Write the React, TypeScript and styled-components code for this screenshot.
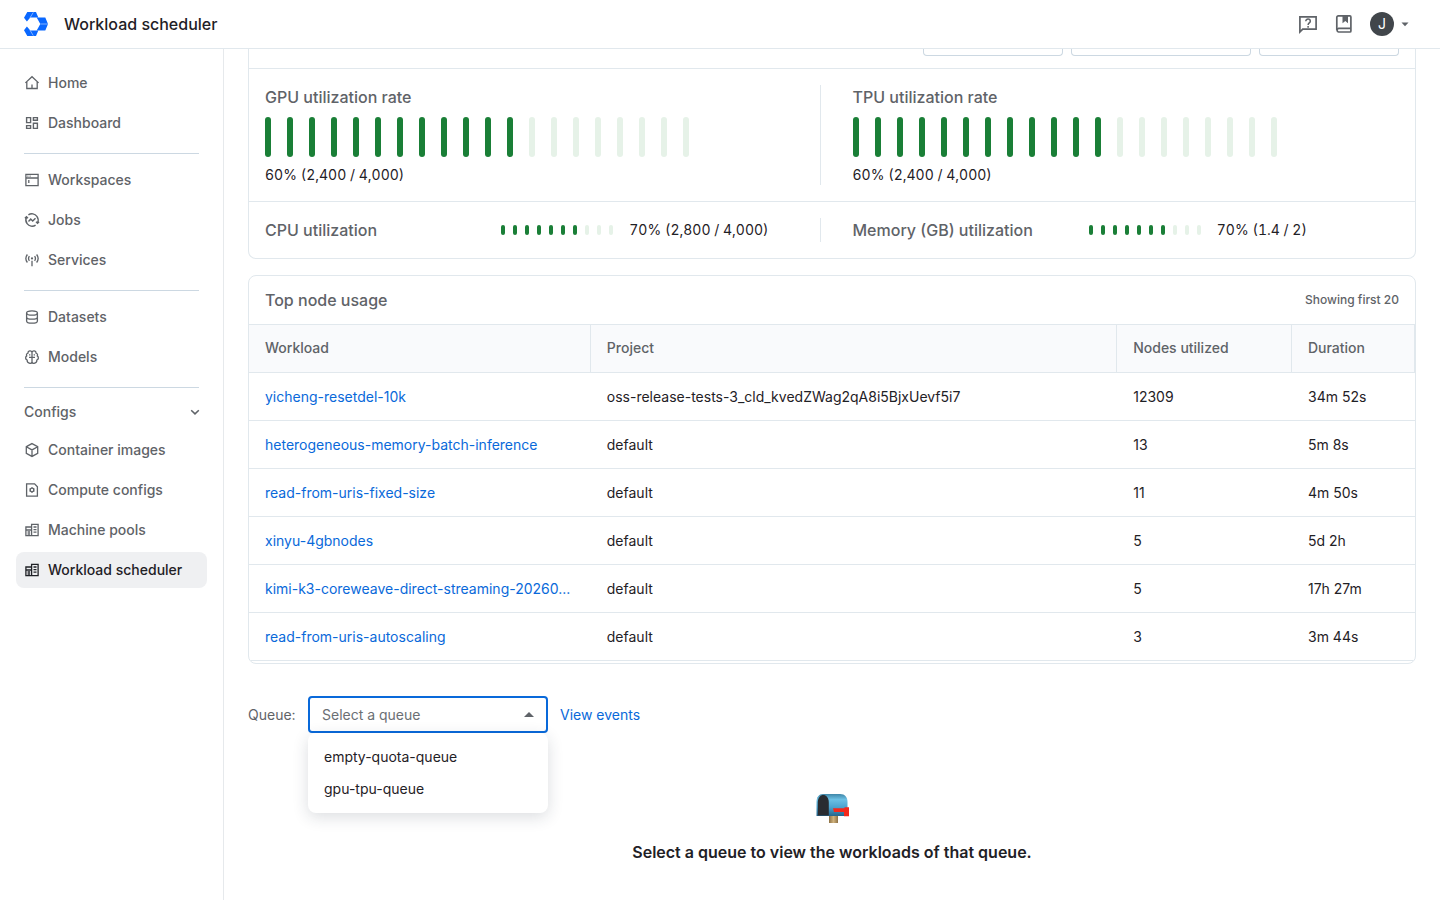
import React from 'react';
import styled, { createGlobalStyle } from 'styled-components';

const GlobalStyle = createGlobalStyle`
  *, *::before, *::after { box-sizing: border-box; }
  html, body { margin: 0; height: 100%; overflow: hidden; background: #fff; }
  body {
    font-family: Inter, "Liberation Sans", sans-serif;
    font-size: 14px;
    line-height: 20px;
    color: #1f2126;
  }
`;

const Page = styled.div`
  display: flex;
  flex-direction: column;
  height: 900px;
`;

const Header = styled.header`
  display: flex;
  align-items: center;
  height: 49px;
  flex: none;
  padding: 0 31px 0 24px;
  border-bottom: 1px solid #e1e8ed;
  svg { display: block; }
`;

const HeaderTitle = styled.h1`
  margin: 0 auto 0 16px;
  font-size: 16px;
  line-height: 24px;
  font-weight: 500;
`;

const HeaderActions = styled.div`
  display: flex;
  align-items: center;
  color: #5f6368;
  > svg + svg { margin-left: 12px; }
`;

const Avatar = styled.div`
  width: 24px;
  height: 24px;
  margin: 0 7px 0 14px;
  border-radius: 50%;
  background: #41464b;
  color: #fff;
  font-size: 14px;
  line-height: 24px;
  text-align: center;
`;

const Body = styled.div`
  display: flex;
  flex: 1;
  min-height: 0;
`;

const Sidebar = styled.nav`
  width: 224px;
  flex: none;
  padding: 16px 16px 0;
  border-right: 1px solid #e6e9ec;
  display: flex;
  flex-direction: column;
  gap: 4px;
`;

const NavItem = styled.a<{ $active?: boolean }>`
  display: flex;
  align-items: center;
  gap: 8px;
  height: 36px;
  padding: 0 8px;
  border-radius: 8px;
  font-weight: 500;
  color: ${(p) => (p.$active ? '#1f2126' : '#5f6368')};
  background: ${(p) => (p.$active ? '#eff0f2' : 'transparent')};
`;

const NavDivider = styled.hr`
  width: 175px;
  height: 1px;
  margin: 8px 8px 4px;
  border: 0;
  background: #ccd8e2;
`;

const NavGroup = styled.div`
  display: flex;
  align-items: center;
  justify-content: space-between;
  height: 32px;
  padding: 0 4px 0 8px;
  font-weight: 500;
  color: #5f6368;
`;

const Main = styled.main`
  flex: 1;
  min-width: 0;
  padding: 0 24px;
  overflow: hidden;
`;

const SummaryCard = styled.section`
  border: 1px solid #e1e8ed;
  border-top: 0;
  border-radius: 0 0 8px 8px;
`;

const FilterBar = styled.div`
  display: flex;
  justify-content: flex-end;
  gap: 8px;
  height: 20px;
  padding-right: 16px;
  border-bottom: 1px solid #e1e8ed;
`;

const FilterEdge = styled.div<{ $width: number }>`
  width: ${(p) => p.$width}px;
  height: 7px;
  border: 1px solid #ccd8e2;
  border-top: 0;
  border-radius: 0 0 4px 4px;
`;

const MetricRow = styled.div`
  display: flex;
  padding: 16px;
  & + & { border-top: 1px solid #e1e8ed; }
`;

const Metric = styled.div<{ $inline?: boolean }>`
  display: flex;
  flex-direction: ${(p) => (p.$inline ? 'row' : 'column')};
  align-items: ${(p) => (p.$inline ? 'center' : 'stretch')};
  gap: ${(p) => (p.$inline ? '16px' : '8px')};
  width: 555px;
  & + & {
    width: auto;
    flex: 1;
    border-left: 1px solid #e1e8ed;
    padding-left: 31.5px;
  }
`;

const MetricTitle = styled.div<{ $inline?: boolean }>`
  width: ${(p) => (p.$inline ? '220.25px' : 'auto')};
  font-size: 16px;
  line-height: 24px;
  font-weight: 500;
  color: #5f6368;
`;

const Bars = styled.div<{ $small?: boolean }>`
  display: flex;
  gap: ${(p) => (p.$small ? '8px' : '16px')};
`;

const Bar = styled.span<{ $small?: boolean; $on: boolean }>`
  width: ${(p) => (p.$small ? 4 : 6)}px;
  height: ${(p) => (p.$small ? 10 : 40)}px;
  border-radius: ${(p) => (p.$small ? 2 : 3)}px;
  background: ${(p) => (p.$on ? '#1a7f37' : '#e6f2e8')};
`;

const MetricValue = styled.div`
  font-variant-numeric: tabular-nums;
`;

const TableCard = styled.section`
  height: 389px;
  margin-top: 16px;
  border: 1px solid #e1e8ed;
  border-radius: 8px;
  overflow: hidden;
`;

const TableTitle = styled.div`
  display: flex;
  align-items: center;
  justify-content: space-between;
  height: 49px;
  padding: 0 16px;
  border-bottom: 1px solid #e1e8ed;
  color: #5f6368;
  font-size: 16px;
  line-height: 24px;
  font-weight: 500;
  small { font-size: 12px; line-height: 16px; }
`;

const Row = styled.div`
  display: grid;
  grid-template-columns: 341.8px 526.4px 174.8px 123px;
  height: 48px;
  border-bottom: 1px solid #e1e8ed;
`;

const HeadRow = styled(Row)`
  background: #f9fafc;
  color: #5f6368;
  font-weight: 500;
`;

const Cell = styled.div`
  padding: 14px 16px 0;
  white-space: nowrap;
  overflow: hidden;
  text-overflow: ellipsis;
  ${HeadRow} & { border-right: 1px solid #e1e8ed; padding-top: 13px; }
`;

const LinkCell = styled(Cell)`
  color: #0969da;
`;

const QueueBar = styled.div`
  display: flex;
  align-items: center;
  gap: 12px;
  margin-top: 32px;
  height: 37px;
`;

const QueueLabel = styled.span`
  width: 48px;
  color: #5f6368;
`;

const SelectWrap = styled.div`
  position: relative;
  width: 240px;
`;

const Select = styled.div`
  display: flex;
  align-items: center;
  justify-content: space-between;
  height: 37px;
  padding: 0 12px;
  border: 2px solid #0969da;
  border-radius: 4px;
  color: #6b6f74;
`;

const Menu = styled.div`
  position: absolute;
  top: 37px;
  left: 0;
  width: 240px;
  padding: 8px 0;
  border-radius: 8px;
  background: #fff;
  box-shadow: 0 4px 16px rgba(31, 45, 61, 0.16);
`;

const Option = styled.div`
  height: 32px;
  padding: 6px 16px;
`;

const TextLink = styled.a`
  color: #0969da;
`;

const Empty = styled.div`
  display: flex;
  flex-direction: column;
  align-items: center;
  margin-top: 60px;
  font-size: 16px;
  line-height: 24px;
  font-weight: 600;
  svg { display: block; margin: 0 0 16px 2px; }
`;

const Icon = styled.svg.attrs((p) => ({
  width: 16,
  height: 16,
  viewBox: '0 0 16 16',
  fill: 'none',
  stroke: 'currentColor',
  strokeWidth: p.strokeWidth ?? 1.3,
}))`
  flex: none;
`;

const HomeIcon = () => (
  <Icon>
    <path d="M1.4 7.9 8 1.7l6.6 6.2M2.8 6.8v6.7h10.4V6.8M8 9.5v4" />
  </Icon>
);
const DashboardIcon = () => (
  <Icon strokeWidth={1.4}>
    <path d="M2.6 2.6h4v5h-4zM9.4 2.6h4v2.6h-4zM2.6 10.6h4v2.8h-4zM9.4 8.2h4v5.2h-4z" />
  </Icon>
);
const WorkspacesIcon = () => (
  <Icon>
    <path d="M1.9 2.4h12.2v11.2H1.9zM2 6h12M4.8 8v3M3.4 4.2h1M5.6 4.2h1" />
  </Icon>
);
const JobsIcon = () => (
  <Icon strokeWidth={1.4}>
    <path d="M4.4 2.9a6.200 6.200 0 0 1 8.500 1.400 6.200 6.200 0 0 1 .6 6.400M11.600 13.100a6.200 6.200 0 0 1-8.500-1.400 6.200 6.200 0 0 1-.6-6.400M.9 6.300l1.600-1.500L4 6.200M15.100 9.700l-1.600 1.500L12 9.800M4.500 9.400l2.200-2.300 2 1.900 2.800-2.800" />
  </Icon>
);
const ServicesIcon = () => (
  <Icon>
    <path d="M3.4 2.5a6.5 6.5 0 0 0 0 8M12.6 2.5a6.5 6.5 0 0 1 0 8M5.4 4.2a4 4 0 0 0 0 4.7M10.6 4.2a4 4 0 0 1 0 4.7M8 8.8v5.4" />
    <circle cx="8" cy="6.4" r="1.1" fill="currentColor" stroke="none" />
  </Icon>
);
const DatasetsIcon = () => (
  <Icon>
    <ellipse cx="8" cy="4" rx="5.4" ry="2.2" />
    <path d="M2.6 4v8c0 1.2 2.4 2.2 5.4 2.2s5.4-1 5.4-2.2V4M2.6 8c0 1.2 2.4 2.2 5.4 2.2s5.4-1 5.4-2.2" />
  </Icon>
);
const ModelsIcon = () => (
  <Icon>
    <path d="M8 3.2C7.4 1.4 3.900 1.300 3.900 4.200 2.400 4.700 2.200 6 2.700 6.900 1.100 8 1.300 10.300 3.100 11 3.100 14.600 7.300 15.300 8 13V3.200C8.600 1.400 12.100 1.300 12.100 4.200c1.500.5 1.700 1.800 1.200 2.700 1.600 1.100 1.400 3.400-.4 4.100 0 3.600-4.200 4.300-4.900 2M5 8.300h6M5.700 5.300v1.200M10.300 5.300v1.200" />
  </Icon>
);
const CubeIcon = () => (
  <Icon>
    <path d="M8 1.6 13.7 4.7v6.6L8 14.4l-5.700-3.100V4.700zM2.300 4.700 8 7.900l5.700-3.200M8 7.900v6.500" />
  </Icon>
);
const ConfigIcon = () => (
  <Icon>
    <path d="M2.600 1.900h8l2.800 2.800v9.400H2.600z" />
    <circle cx="8" cy="8" r="1.800" />
    <path d="M8 5.200v1M8 9.800v1M5.600 6.600l.8.500M9.600 8.900l.8.500M5.600 9.400l.8-.5M9.600 7.100l.8-.5" />
  </Icon>
);
const PoolIcon = () => (
  <Icon>
    <path d="M7.600 5H1.900v8.600h12.200V2.400H7.600v11.200M1.900 8h5.700M3.600 10h2.500M3.600 12h2.500M9.500 5h3M9.500 7.600h3M9.500 10.200h3" />
  </Icon>
);

const Logo = () => (
  <svg width="24" height="24" viewBox="0 0 24 24">
    <g fill="#0a68ff">
      <path d="M3.300 0H12l2.300 5.600h-8L2.900 9.400 0 5.800z" />
      <path d="M3.300 24H12l2.300-5.600h-8l-3.400-3.800L0 18.200z" />
      <path d="M12.700 5.600h8.600L24 12l-2.700 6.400h-8.600L16.300 12z" />
    </g>
    <path d="M9.300.4 6 5.800M9.300 23.600 6 18.200M16.300 12h7.500" stroke="#b5d1ff" strokeWidth=".7" />
  </svg>
);

const HelpIcon = () => (
  <svg width="24" height="24" viewBox="0 0 24 24" fill="none" stroke="currentColor" strokeWidth="1.7">
    <path d="M3.900 20V4.900h16.200v12.200H6.700z" />
    <path d="M9.800 9.200c0-2.900 4.500-2.800 4.500 0 0 1.700-2.200 1.800-2.200 3.700M12.100 14v1.700" strokeWidth="1.500" />
  </svg>
);
const BookIcon = () => (
  <svg width="24" height="24" viewBox="0 0 24 24" fill="none" stroke="currentColor" strokeWidth="1.7">
    <path d="M18.900 16.300H6.600a1.900 1.900 0 0 0 0 3.700h11.300a1 1 0 0 0 1-1V4.900a1 1 0 0 0-1-1H6.300a1.500 1.500 0 0 0-1.500 1.500v12.800" />
    <path d="M10.500 4h5.500v7.200l-2.700-2.200-2.800 2.200z" fill="currentColor" stroke="none" />
  </svg>
);

const MailboxIcon = () => (
  <svg width="34" height="31" viewBox="0 0 34 31">
    <defs>
      <linearGradient id="shell" x1="0" y1="0" x2="0" y2="1">
        <stop offset="0" stopColor="#3f86a8" />
        <stop offset=".25" stopColor="#6cc0e4" />
        <stop offset=".6" stopColor="#4ba3cf" />
        <stop offset="1" stopColor="#25658c" />
      </linearGradient>
      <linearGradient id="post" x1="0" y1="0" x2="1" y2="0">
        <stop offset="0" stopColor="#8d7146" />
        <stop offset=".5" stopColor="#d0b27c" />
        <stop offset="1" stopColor="#8d7146" />
      </linearGradient>
    </defs>
    <path d="M13 22h9v8h-9z" fill="url(#post)" />
    <path d="M7 1h17c5 0 7.500 3.500 7.500 8v14H.5V9C.5 4 3 1 7 1z" fill="url(#shell)" />
    <path d="M1.800 22.500V9.500c0-10 11-10 11 0v13z" fill="#292c31" />
    <path d="M17 15.200h11.500v-.9H33v9h-5v-4.200H18z" fill="#f3281c" />
  </svg>
);

const primaryNav = [
  { label: 'Home', icon: HomeIcon },
  { label: 'Dashboard', icon: DashboardIcon },
];
const workNav = [
  { label: 'Workspaces', icon: WorkspacesIcon },
  { label: 'Jobs', icon: JobsIcon },
  { label: 'Services', icon: ServicesIcon },
];
const dataNav = [
  { label: 'Datasets', icon: DatasetsIcon },
  { label: 'Models', icon: ModelsIcon },
];
const configNav = [
  { label: 'Container images', icon: CubeIcon },
  { label: 'Compute configs', icon: ConfigIcon },
  { label: 'Machine pools', icon: PoolIcon },
  { label: 'Workload scheduler', icon: PoolIcon },
];

const workloads = [
  ['yicheng-resetdel-10k', 'oss-release-tests-3_cld_kvedZWag2qA8i5BjxUevf5i7', '12309', '34m 52s'],
  ['heterogeneous-memory-batch-inference', 'default', '13', '5m 8s'],
  ['read-from-uris-fixed-size', 'default', '11', '4m 50s'],
  ['xinyu-4gbnodes', 'default', '5', '5d 2h'],
  ['kimi-k3-coreweave-direct-streaming-20260...', 'default', '5', '17h 27m'],
  ['read-from-uris-autoscaling', 'default', '3', '3m 44s'],
];

type NavEntry = { label: string; icon: () => React.JSX.Element };

const NavList = ({ items }: { items: NavEntry[] }) => (
  <>
    {items.map(({ label, icon: Glyph }) => (
      <NavItem key={label} $active={label === 'Workload scheduler'}>
        <Glyph />
        {label}
      </NavItem>
    ))}
  </>
);

type GaugeProps = { title: string; value: string; total: number; filled: number; inline?: boolean };

const Gauge = ({ title, value, total, filled, inline }: GaugeProps) => (
  <Metric $inline={inline}>
    <MetricTitle $inline={inline}>{title}</MetricTitle>
    <Bars $small={inline}>
      {Array.from({ length: total }, (_, i) => (
        <Bar key={i} $small={inline} $on={i < filled} />
      ))}
    </Bars>
    <MetricValue>{value}</MetricValue>
  </Metric>
);

export default function App() {
  return (
    <Page>
      <GlobalStyle />
      <Header>
        <Logo />
        <HeaderTitle>Workload scheduler</HeaderTitle>
        <HeaderActions>
          <HelpIcon />
          <BookIcon />
          <Avatar>J</Avatar>
          <svg width="8" height="5" viewBox="0 0 8 5" fill="currentColor"><path d="M.5.5h7L4 4.2z" /></svg>
        </HeaderActions>
      </Header>
      <Body>
        <Sidebar>
          <NavList items={primaryNav} />
          <NavDivider />
          <NavList items={workNav} />
          <NavDivider />
          <NavList items={dataNav} />
          <NavDivider />
          <NavGroup>
            Configs
            <Icon strokeWidth={1.5}><path d="m4.200 6.200 3.800 3.700 3.800-3.700" /></Icon>
          </NavGroup>
          <NavList items={configNav} />
        </Sidebar>
        <Main>
          <SummaryCard>
            <FilterBar>
              <FilterEdge $width={140} />
              <FilterEdge $width={180} />
              <FilterEdge $width={140} />
            </FilterBar>
            <MetricRow>
              <Gauge title="GPU utilization rate" value="60% (2,400 / 4,000)" total={20} filled={12} />
              <Gauge title="TPU utilization rate" value="60% (2,400 / 4,000)" total={20} filled={12} />
            </MetricRow>
            <MetricRow>
              <Gauge inline title="CPU utilization" value="70% (2,800 / 4,000)" total={10} filled={7} />
              <Gauge inline title="Memory (GB) utilization" value="70% (1.4 / 2)" total={10} filled={7} />
            </MetricRow>
          </SummaryCard>
          <TableCard>
            <TableTitle>
              Top node usage
              <small>Showing first 20</small>
            </TableTitle>
            <HeadRow>
              <Cell>Workload</Cell>
              <Cell>Project</Cell>
              <Cell>Nodes utilized</Cell>
              <Cell>Duration</Cell>
            </HeadRow>
            {workloads.map(([name, project, nodes, duration]) => (
              <Row key={name}>
                <LinkCell>{name}</LinkCell>
                <Cell>{project}</Cell>
                <Cell>{nodes}</Cell>
                <Cell>{duration}</Cell>
              </Row>
            ))}
          </TableCard>
          <QueueBar>
            <QueueLabel>Queue:</QueueLabel>
            <SelectWrap>
              <Select>
                Select a queue
                <svg width="10" height="5" viewBox="0 0 10 5" fill="#5f6368"><path d="M0 5 5 0l5 5z" /></svg>
              </Select>
              <Menu>
                <Option>empty-quota-queue</Option>
                <Option>gpu-tpu-queue</Option>
              </Menu>
            </SelectWrap>
            <TextLink>View events</TextLink>
          </QueueBar>
          <Empty>
            <MailboxIcon />
            Select a queue to view the workloads of that queue.
          </Empty>
        </Main>
      </Body>
    </Page>
  );
}
